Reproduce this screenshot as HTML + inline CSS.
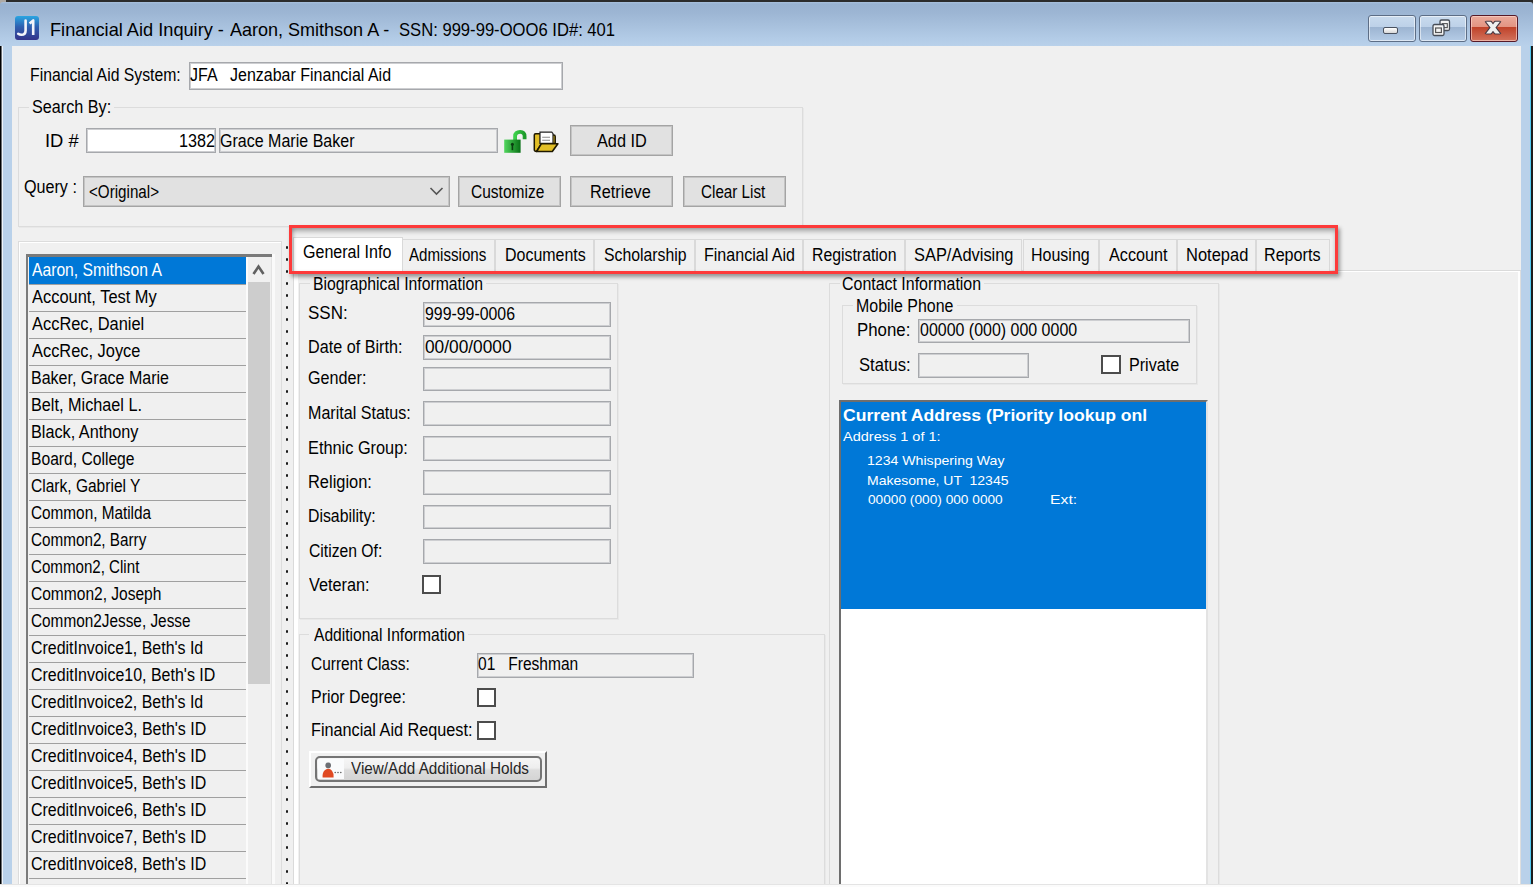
<!DOCTYPE html>
<html><head><meta charset="utf-8"><title>Financial Aid Inquiry</title>
<style>
html,body{margin:0;padding:0;width:1533px;height:887px;overflow:hidden;background:#2b2b2b}
body>div,body>svg{position:absolute}
.t{position:absolute;font-family:"Liberation Sans",sans-serif;white-space:pre;line-height:normal;transform-origin:0 0}
</style></head><body>
<div style="left:0px;top:0px;width:1533px;height:887px;background:#2b2b2b"></div>
<div style="left:0px;top:0px;width:6px;height:6px;background:#aeaaa6"></div>
<div style="left:0px;top:2px;width:1533px;height:885px;border-radius:3px 3px 0 0;background:linear-gradient(#a9c0dc 0px,#98b2d1 2px,#9cb5d3 10px,#b2cbe6 36px,#b9d1ea 44px,#b9d1ea 100%)"></div>
<div style="left:0px;top:46px;width:1px;height:838px;background:#000"></div>
<div style="left:1px;top:46px;width:1px;height:838px;background:#6a6e73"></div>
<div style="left:2px;top:46px;width:1px;height:838px;background:#eef4fb"></div>
<div style="left:1530px;top:46px;width:1px;height:838px;background:#52c9f2"></div>
<div style="left:1531px;top:46px;width:2px;height:841px;background:#1e1e1e"></div>
<div style="left:12px;top:46px;width:1509px;height:838px;background:#f0f0f0"></div>
<div style="left:1518px;top:271px;width:2px;height:613px;background:#fdfdfd"></div>
<div style="left:1520px;top:271px;width:1px;height:613px;background:#dedede"></div>
<div style="left:15px;top:16px;width:24px;height:24px;border-radius:3px;background:linear-gradient(#2aa6e2,#2f5fb0 45%,#34338a);"></div>
<svg style="left:15px;top:16px" width="24" height="24" viewBox="0 0 24 24"><path d="M10.6 4.6 V14.4 Q10.6 18.8 6.4 18.8 Q4.6 18.8 3.2 17.8" fill="none" stroke="#f4f4fa" stroke-width="2.6" stroke-linecap="round"/><path d="M14.6 7.4 L18.2 4.4 V19" fill="none" stroke="#f4f4fa" stroke-width="2.6" stroke-linejoin="round"/></svg>
<div style="left:1368px;top:15px;width:46px;height:25px;border:1px solid #5d6e86;border-radius:3px;background:linear-gradient(#c9dbee 0%,#bdd1e8 43%,#9cb4d1 44%,#b5cce6 100%);box-shadow:inset 0 0 0 1px rgba(255,255,255,.55)"></div>
<div style="left:1419px;top:15px;width:46px;height:25px;border:1px solid #5d6e86;border-radius:3px;background:linear-gradient(#c9dbee 0%,#bdd1e8 43%,#9cb4d1 44%,#b5cce6 100%);box-shadow:inset 0 0 0 1px rgba(255,255,255,.55)"></div>
<div style="left:1470px;top:15px;width:46px;height:25px;border:1px solid #561a28;border-radius:3px;background:linear-gradient(#eaaa9b 0%,#e39482 43%,#bf4128 44%,#d3735d 100%);box-shadow:inset 0 0 0 1px rgba(255,220,210,.6)"></div>
<div style="left:1383px;top:27px;width:13px;height:5px;border:1px solid #4a5260;border-radius:2px;background:linear-gradient(#ffffff,#d8d8d8)"></div>
<svg style="left:1430px;top:18px" width="22" height="20" viewBox="0 0 22 20"><rect x="10" y="2" width="9.5" height="10.5" rx="1.5" fill="#f4f4f4" stroke="#474d57" stroke-width="1.3"/><rect x="12.3" y="5.6" width="5" height="4" fill="none" stroke="#555" stroke-width="1.1"/><rect x="3" y="6.5" width="11" height="11" rx="1.5" fill="#f4f4f4" stroke="#474d57" stroke-width="1.3"/><rect x="5.6" y="10" width="5.8" height="4.5" fill="none" stroke="#555" stroke-width="1.2"/></svg>
<svg style="left:1483px;top:19px" width="20" height="18" viewBox="0 0 20 18"><clipPath id="xc"><rect x="0" y="1.8" width="20" height="13.6"/></clipPath><g clip-path="url(#xc)"><path d="M4 0.8 L16 16.4 M16 0.8 L4 16.4" stroke="#4a3a44" stroke-width="6"/></g><clipPath id="xc2"><rect x="0" y="2.8" width="20" height="11.6"/></clipPath><g clip-path="url(#xc2)"><path d="M4 0.8 L16 16.4 M16 0.8 L4 16.4" stroke="#f0f0f0" stroke-width="3.8"/></g></svg>
<div style="left:189px;top:62px;width:374px;height:28px;background:#fff;border:1px solid #a6a8ac;box-shadow:inset 0 0 0 1px #cdced1;box-sizing:border-box"></div>
<div style="left:18px;top:107px;width:785px;height:120px;border:1px solid #dcdcdc;box-shadow:1px 1px 0 #e8e8e8;box-sizing:border-box"></div>
<div style="left:29px;top:100px;width:85px;height:15px;background:#f0f0f0"></div>
<div style="left:86px;top:128px;width:130px;height:25px;background:#fff;border:1px solid #a6a8ac;box-shadow:inset 0 0 0 1px #cdced1;box-sizing:border-box"></div>
<div style="left:219px;top:128px;width:279px;height:25px;background:#f0f0f0;border:1px solid #a6a8ac;box-shadow:inset 0 0 0 1px #cdced1;box-sizing:border-box"></div>
<svg style="left:502px;top:129px" width="28" height="26" viewBox="0 0 28 26"><defs><linearGradient id="lg" x1="0" x2="1"><stop offset="0" stop-color="#52d65e"/><stop offset="0.45" stop-color="#30a83c"/><stop offset="1" stop-color="#087016"/></linearGradient><linearGradient id="lg2" x1="0" x2="1"><stop offset="0" stop-color="#3ccf4a"/><stop offset="1" stop-color="#1c9a2a"/></linearGradient></defs><path d="M13.1 11 V7.4 Q13.1 2.9 18.2 2.9 Q22.6 2.9 22.6 7.6 V10.2" fill="none" stroke="url(#lg2)" stroke-width="3.8"/><rect x="2.2" y="10.6" width="16.4" height="13.2" fill="url(#lg)"/><circle cx="10.4" cy="15.2" r="1.5" fill="#0a3d10"/><path d="M10.4 15 V21.2" stroke="#0a3d10" stroke-width="1.6"/></svg>
<svg style="left:532px;top:130px" width="28" height="24" viewBox="0 0 28 24"><path d="M2.3 5 Q2.3 3.8 3.6 3.8 H8.5 V13.4 H19.5 V5 H21.8 Q23.2 5 23.2 6.4 V13.6 L9.4 13.6 L4.6 21.4 Q2.3 21.4 2.3 19.8 Z" fill="#e2bf26" stroke="#1e1800" stroke-width="1.5" stroke-linejoin="round"/><path d="M8 13.4 V2.2 H19.8 L21 3.6 V13.4 Z" fill="#fff" stroke="#222" stroke-width="1.2"/><path d="M10.2 7.3 H18 M10.2 10.3 H18" stroke="#8a8a8a" stroke-width="1.1"/><path d="M4.6 21.5 L9.3 13.8 H25.9 L20.3 21.5 Z" fill="#e2bf26" stroke="#1e1800" stroke-width="1.6" stroke-linejoin="round"/></svg>
<div style="left:570px;top:125px;width:103px;height:31px;background:#e1e1e1;border:1px solid #a4a4a4;box-shadow:inset 0 0 0 1px #c4c4c4;box-sizing:border-box"></div>
<div style="left:83px;top:176px;width:367px;height:31px;background:#e1e1e1;border:1px solid #a4a4a4;box-shadow:inset 0 0 0 1px #c4c4c4;box-sizing:border-box"></div>
<svg style="left:428px;top:185px" width="18" height="12" viewBox="0 0 18 12"><path d="M2.5 3 L8.5 9 L14.5 3" fill="none" stroke="#555" stroke-width="1.6"/></svg>
<div style="left:458px;top:176px;width:103px;height:31px;background:#e1e1e1;border:1px solid #a4a4a4;box-shadow:inset 0 0 0 1px #c4c4c4;box-sizing:border-box"></div>
<div style="left:570px;top:176px;width:103px;height:31px;background:#e1e1e1;border:1px solid #a4a4a4;box-shadow:inset 0 0 0 1px #c4c4c4;box-sizing:border-box"></div>
<div style="left:683px;top:176px;width:103px;height:31px;background:#e1e1e1;border:1px solid #a4a4a4;box-shadow:inset 0 0 0 1px #c4c4c4;box-sizing:border-box"></div>
<div style="left:18px;top:241px;width:264px;height:643px;border-left:1px solid #dcdcdc;border-top:1px solid #dcdcdc;border-right:1px solid #dcdcdc;box-shadow:inset 1px 1px 0 #fff;box-sizing:border-box"></div>
<div style="left:26px;top:254px;width:247px;height:630px;background:#f0f0f0;border-left:2.5px solid #7a7a7a;border-top:3px solid #7a7a7a;box-sizing:border-box"></div>
<div style="left:272px;top:254px;width:3px;height:630px;background:#fafafa"></div>
<div style="left:271px;top:257px;width:1px;height:627px;background:#e4e4e4"></div>
<div style="left:29px;top:257px;width:217px;height:27px;background:#0078d7"></div>
<div style="left:29px;top:284px;width:217px;height:1px;background:#a0a0a0"></div>
<div style="left:29px;top:311px;width:217px;height:1px;background:#a0a0a0"></div>
<div style="left:29px;top:338px;width:217px;height:1px;background:#a0a0a0"></div>
<div style="left:29px;top:365px;width:217px;height:1px;background:#a0a0a0"></div>
<div style="left:29px;top:392px;width:217px;height:1px;background:#a0a0a0"></div>
<div style="left:29px;top:419px;width:217px;height:1px;background:#a0a0a0"></div>
<div style="left:29px;top:446px;width:217px;height:1px;background:#a0a0a0"></div>
<div style="left:29px;top:473px;width:217px;height:1px;background:#a0a0a0"></div>
<div style="left:29px;top:500px;width:217px;height:1px;background:#a0a0a0"></div>
<div style="left:29px;top:527px;width:217px;height:1px;background:#a0a0a0"></div>
<div style="left:29px;top:554px;width:217px;height:1px;background:#a0a0a0"></div>
<div style="left:29px;top:581px;width:217px;height:1px;background:#a0a0a0"></div>
<div style="left:29px;top:608px;width:217px;height:1px;background:#a0a0a0"></div>
<div style="left:29px;top:635px;width:217px;height:1px;background:#a0a0a0"></div>
<div style="left:29px;top:662px;width:217px;height:1px;background:#a0a0a0"></div>
<div style="left:29px;top:689px;width:217px;height:1px;background:#a0a0a0"></div>
<div style="left:29px;top:716px;width:217px;height:1px;background:#a0a0a0"></div>
<div style="left:29px;top:743px;width:217px;height:1px;background:#a0a0a0"></div>
<div style="left:29px;top:770px;width:217px;height:1px;background:#a0a0a0"></div>
<div style="left:29px;top:797px;width:217px;height:1px;background:#a0a0a0"></div>
<div style="left:29px;top:824px;width:217px;height:1px;background:#a0a0a0"></div>
<div style="left:29px;top:851px;width:217px;height:1px;background:#a0a0a0"></div>
<div style="left:29px;top:878px;width:217px;height:1px;background:#a0a0a0"></div>
<div style="left:29px;top:878px;width:217px;height:1px;background:#a0a0a0"></div>
<div style="left:246px;top:257px;width:2px;height:627px;background:#fbfbfb"></div>
<svg style="left:250px;top:262px" width="18" height="16" viewBox="0 0 18 16"><path d="M3.5 12 L8.5 4.5 L13.5 12" fill="none" stroke="#606060" stroke-width="2.6"/></svg>
<div style="left:248px;top:282px;width:22px;height:402px;background:#cdcdcd"></div>
<div style="left:286px;top:246.0px;width:2.4px;height:3px;border-radius:1px;background:#1a1a1a"></div>
<div style="left:286px;top:258.0px;width:2.4px;height:3px;border-radius:1px;background:#1a1a1a"></div>
<div style="left:286px;top:270.0px;width:2.4px;height:3px;border-radius:1px;background:#1a1a1a"></div>
<div style="left:286px;top:282.0px;width:2.4px;height:3px;border-radius:1px;background:#1a1a1a"></div>
<div style="left:286px;top:294.0px;width:2.4px;height:3px;border-radius:1px;background:#1a1a1a"></div>
<div style="left:286px;top:306.0px;width:2.4px;height:3px;border-radius:1px;background:#1a1a1a"></div>
<div style="left:286px;top:318.0px;width:2.4px;height:3px;border-radius:1px;background:#1a1a1a"></div>
<div style="left:286px;top:330.0px;width:2.4px;height:3px;border-radius:1px;background:#1a1a1a"></div>
<div style="left:286px;top:342.0px;width:2.4px;height:3px;border-radius:1px;background:#1a1a1a"></div>
<div style="left:286px;top:354.0px;width:2.4px;height:3px;border-radius:1px;background:#1a1a1a"></div>
<div style="left:286px;top:366.0px;width:2.4px;height:3px;border-radius:1px;background:#1a1a1a"></div>
<div style="left:286px;top:378.0px;width:2.4px;height:3px;border-radius:1px;background:#1a1a1a"></div>
<div style="left:286px;top:390.0px;width:2.4px;height:3px;border-radius:1px;background:#1a1a1a"></div>
<div style="left:286px;top:402.0px;width:2.4px;height:3px;border-radius:1px;background:#1a1a1a"></div>
<div style="left:286px;top:414.0px;width:2.4px;height:3px;border-radius:1px;background:#1a1a1a"></div>
<div style="left:286px;top:426.0px;width:2.4px;height:3px;border-radius:1px;background:#1a1a1a"></div>
<div style="left:286px;top:438.0px;width:2.4px;height:3px;border-radius:1px;background:#1a1a1a"></div>
<div style="left:286px;top:450.0px;width:2.4px;height:3px;border-radius:1px;background:#1a1a1a"></div>
<div style="left:286px;top:462.0px;width:2.4px;height:3px;border-radius:1px;background:#1a1a1a"></div>
<div style="left:286px;top:474.0px;width:2.4px;height:3px;border-radius:1px;background:#1a1a1a"></div>
<div style="left:286px;top:486.0px;width:2.4px;height:3px;border-radius:1px;background:#1a1a1a"></div>
<div style="left:286px;top:498.0px;width:2.4px;height:3px;border-radius:1px;background:#1a1a1a"></div>
<div style="left:286px;top:510.0px;width:2.4px;height:3px;border-radius:1px;background:#1a1a1a"></div>
<div style="left:286px;top:522.0px;width:2.4px;height:3px;border-radius:1px;background:#1a1a1a"></div>
<div style="left:286px;top:534.0px;width:2.4px;height:3px;border-radius:1px;background:#1a1a1a"></div>
<div style="left:286px;top:546.0px;width:2.4px;height:3px;border-radius:1px;background:#1a1a1a"></div>
<div style="left:286px;top:558.0px;width:2.4px;height:3px;border-radius:1px;background:#1a1a1a"></div>
<div style="left:286px;top:570.0px;width:2.4px;height:3px;border-radius:1px;background:#1a1a1a"></div>
<div style="left:286px;top:582.0px;width:2.4px;height:3px;border-radius:1px;background:#1a1a1a"></div>
<div style="left:286px;top:594.0px;width:2.4px;height:3px;border-radius:1px;background:#1a1a1a"></div>
<div style="left:286px;top:606.0px;width:2.4px;height:3px;border-radius:1px;background:#1a1a1a"></div>
<div style="left:286px;top:618.0px;width:2.4px;height:3px;border-radius:1px;background:#1a1a1a"></div>
<div style="left:286px;top:630.0px;width:2.4px;height:3px;border-radius:1px;background:#1a1a1a"></div>
<div style="left:286px;top:642.0px;width:2.4px;height:3px;border-radius:1px;background:#1a1a1a"></div>
<div style="left:286px;top:654.0px;width:2.4px;height:3px;border-radius:1px;background:#1a1a1a"></div>
<div style="left:286px;top:666.0px;width:2.4px;height:3px;border-radius:1px;background:#1a1a1a"></div>
<div style="left:286px;top:678.0px;width:2.4px;height:3px;border-radius:1px;background:#1a1a1a"></div>
<div style="left:286px;top:690.0px;width:2.4px;height:3px;border-radius:1px;background:#1a1a1a"></div>
<div style="left:286px;top:702.0px;width:2.4px;height:3px;border-radius:1px;background:#1a1a1a"></div>
<div style="left:286px;top:714.0px;width:2.4px;height:3px;border-radius:1px;background:#1a1a1a"></div>
<div style="left:286px;top:726.0px;width:2.4px;height:3px;border-radius:1px;background:#1a1a1a"></div>
<div style="left:286px;top:738.0px;width:2.4px;height:3px;border-radius:1px;background:#1a1a1a"></div>
<div style="left:286px;top:750.0px;width:2.4px;height:3px;border-radius:1px;background:#1a1a1a"></div>
<div style="left:286px;top:762.0px;width:2.4px;height:3px;border-radius:1px;background:#1a1a1a"></div>
<div style="left:286px;top:774.0px;width:2.4px;height:3px;border-radius:1px;background:#1a1a1a"></div>
<div style="left:286px;top:786.0px;width:2.4px;height:3px;border-radius:1px;background:#1a1a1a"></div>
<div style="left:286px;top:798.0px;width:2.4px;height:3px;border-radius:1px;background:#1a1a1a"></div>
<div style="left:286px;top:810.0px;width:2.4px;height:3px;border-radius:1px;background:#1a1a1a"></div>
<div style="left:286px;top:822.0px;width:2.4px;height:3px;border-radius:1px;background:#1a1a1a"></div>
<div style="left:286px;top:834.0px;width:2.4px;height:3px;border-radius:1px;background:#1a1a1a"></div>
<div style="left:286px;top:846.0px;width:2.4px;height:3px;border-radius:1px;background:#1a1a1a"></div>
<div style="left:286px;top:858.0px;width:2.4px;height:3px;border-radius:1px;background:#1a1a1a"></div>
<div style="left:286px;top:870.0px;width:2.4px;height:3px;border-radius:1px;background:#1a1a1a"></div>
<div style="left:286px;top:882.0px;width:2.4px;height:3px;border-radius:1px;background:#1a1a1a"></div>
<div style="left:293px;top:270px;width:1228px;height:614px;border-left:1px solid #dadada;border-top:1px solid #dadada;box-sizing:border-box"></div>
<div style="left:294px;top:271px;width:4px;height:613px;background:#fff"></div>
<div style="left:294px;top:271px;width:1226px;height:1px;background:#fff"></div>
<div style="left:402px;top:239px;width:93.39999999999998px;height:32px;background:#f0f0f0;border:1px solid #d9d9d9;border-bottom:none;box-sizing:border-box"></div>
<div style="left:495.4px;top:239px;width:99.0px;height:32px;background:#f0f0f0;border:1px solid #d9d9d9;border-bottom:none;box-sizing:border-box"></div>
<div style="left:594.4px;top:239px;width:100.80000000000007px;height:32px;background:#f0f0f0;border:1px solid #d9d9d9;border-bottom:none;box-sizing:border-box"></div>
<div style="left:695.2px;top:239px;width:107.59999999999991px;height:32px;background:#f0f0f0;border:1px solid #d9d9d9;border-bottom:none;box-sizing:border-box"></div>
<div style="left:802.8px;top:239px;width:102.30000000000007px;height:32px;background:#f0f0f0;border:1px solid #d9d9d9;border-bottom:none;box-sizing:border-box"></div>
<div style="left:905.1px;top:239px;width:117.39999999999998px;height:32px;background:#f0f0f0;border:1px solid #d9d9d9;border-bottom:none;box-sizing:border-box"></div>
<div style="left:1022.5px;top:239px;width:76.40000000000009px;height:32px;background:#f0f0f0;border:1px solid #d9d9d9;border-bottom:none;box-sizing:border-box"></div>
<div style="left:1098.9px;top:239px;width:77.79999999999995px;height:32px;background:#f0f0f0;border:1px solid #d9d9d9;border-bottom:none;box-sizing:border-box"></div>
<div style="left:1176.7px;top:239px;width:79.70000000000005px;height:32px;background:#f0f0f0;border:1px solid #d9d9d9;border-bottom:none;box-sizing:border-box"></div>
<div style="left:1256.4px;top:239px;width:73.59999999999991px;height:32px;background:#f0f0f0;border:1px solid #d9d9d9;border-bottom:none;box-sizing:border-box"></div>
<div style="left:293px;top:236.8px;width:110px;height:35.19999999999999px;background:#fff;border:1px solid #d9d9d9;border-bottom:none;box-sizing:border-box"></div>
<div style="left:299px;top:283px;width:318.5px;height:335.5px;border:1px solid #dcdcdc;box-shadow:1px 1px 0 #e8e8e8;box-sizing:border-box"></div>
<div style="left:310px;top:276px;width:176px;height:16px;background:#f0f0f0"></div>
<div style="left:423px;top:302px;width:187.5px;height:24.80000000000001px;background:#f0f0f0;border:1px solid #a6a8ac;box-shadow:inset 0 0 0 1px #cdced1;box-sizing:border-box"></div>
<div style="left:423px;top:335px;width:187.5px;height:24.80000000000001px;background:#f0f0f0;border:1px solid #a6a8ac;box-shadow:inset 0 0 0 1px #cdced1;box-sizing:border-box"></div>
<div style="left:423px;top:366.7px;width:187.5px;height:24.80000000000001px;background:#f0f0f0;border:1px solid #a6a8ac;box-shadow:inset 0 0 0 1px #cdced1;box-sizing:border-box"></div>
<div style="left:423px;top:401.1px;width:187.5px;height:24.80000000000001px;background:#f0f0f0;border:1px solid #a6a8ac;box-shadow:inset 0 0 0 1px #cdced1;box-sizing:border-box"></div>
<div style="left:423px;top:435.8px;width:187.5px;height:24.80000000000001px;background:#f0f0f0;border:1px solid #a6a8ac;box-shadow:inset 0 0 0 1px #cdced1;box-sizing:border-box"></div>
<div style="left:423px;top:470.2px;width:187.5px;height:24.80000000000001px;background:#f0f0f0;border:1px solid #a6a8ac;box-shadow:inset 0 0 0 1px #cdced1;box-sizing:border-box"></div>
<div style="left:423px;top:504.6px;width:187.5px;height:24.799999999999955px;background:#f0f0f0;border:1px solid #a6a8ac;box-shadow:inset 0 0 0 1px #cdced1;box-sizing:border-box"></div>
<div style="left:423px;top:539.3px;width:187.5px;height:24.799999999999955px;background:#f0f0f0;border:1px solid #a6a8ac;box-shadow:inset 0 0 0 1px #cdced1;box-sizing:border-box"></div>
<div style="left:421.5px;top:574.6px;width:19.5px;height:19.699999999999932px;background:#fff;border:2px solid #4c4c4c;box-sizing:border-box"></div>
<div style="left:299px;top:634px;width:525.5px;height:256px;border:1px solid #dcdcdc;box-shadow:1px 1px 0 #e8e8e8;box-sizing:border-box"></div>
<div style="left:309px;top:626px;width:159px;height:16px;background:#f0f0f0"></div>
<div style="left:477.3px;top:653.1px;width:216.7px;height:24.699999999999932px;background:#f0f0f0;border:1px solid #a6a8ac;box-shadow:inset 0 0 0 1px #cdced1;box-sizing:border-box"></div>
<div style="left:477.3px;top:687.8px;width:19.19999999999999px;height:19.200000000000045px;background:#fff;border:2px solid #4c4c4c;box-sizing:border-box"></div>
<div style="left:477.3px;top:720.7px;width:19.19999999999999px;height:19.299999999999955px;background:#fff;border:2px solid #4c4c4c;box-sizing:border-box"></div>
<div style="left:309.4px;top:750.6px;width:238.10000000000002px;height:37.39999999999998px;background:#f0f0f0;border-top:2px solid #fff;border-left:2.5px solid #fff;border-bottom:2.5px solid #6e6e6e;border-right:2.5px solid #6e6e6e;box-sizing:border-box"></div>
<div style="left:315px;top:756.2px;width:226.5px;height:25.5px;border:2px solid #747474;border-radius:5px;box-sizing:border-box;background:linear-gradient(#f6f6f6,#eeeeee 45%,#dcdcdc 55%,#d4d4d4)"></div>
<div style="left:318px;top:759px;width:26px;height:20px;background:#fafbfc"></div>
<svg style="left:318px;top:758px" width="26" height="22" viewBox="0 0 26 22"><circle cx="10.2" cy="7.4" r="2.8" fill="#6c6f74"/><path d="M4.6 19.6 Q4.2 15 6.5 12.6 Q8 10.8 10.2 10.8 Q12.6 10.8 14 12.8 Q15.8 15 15.6 19.6 Z" fill="#e04a22"/><circle cx="17.2" cy="14.6" r=".75" fill="#555"/><circle cx="20" cy="14.6" r=".75" fill="#555"/><circle cx="22.8" cy="14.6" r=".75" fill="#555"/></svg>
<div style="left:828.8px;top:283px;width:390.20000000000005px;height:607px;border:1px solid #dcdcdc;box-shadow:1px 1px 0 #e8e8e8;box-sizing:border-box"></div>
<div style="left:839.5px;top:276px;width:144.5px;height:16px;background:#f0f0f0"></div>
<div style="left:841.7px;top:305px;width:355.29999999999995px;height:79px;border:1px solid #dcdcdc;box-shadow:1px 1px 0 #e8e8e8;box-sizing:border-box"></div>
<div style="left:853px;top:298px;width:104px;height:16px;background:#f0f0f0"></div>
<div style="left:918px;top:318.5px;width:271.5px;height:24.80000000000001px;background:#f0f0f0;border:1px solid #a6a8ac;box-shadow:inset 0 0 0 1px #cdced1;box-sizing:border-box"></div>
<div style="left:918px;top:352.9px;width:110.5px;height:24.700000000000045px;background:#f0f0f0;border:1px solid #a6a8ac;box-shadow:inset 0 0 0 1px #cdced1;box-sizing:border-box"></div>
<div style="left:1101px;top:354.8px;width:20px;height:19.5px;background:#fff;border:2px solid #4c4c4c;box-sizing:border-box"></div>
<div style="left:839px;top:399.5px;width:369px;height:484.5px;background:#fff;border-left:2.4px solid #6e6e6e;border-top:2.6px solid #6e6e6e;border-right:2px solid #e3e3e3;box-sizing:border-box"></div>
<div style="left:841.4px;top:402.4px;width:364.6px;height:206.80000000000007px;background:#0078d7"></div>
<div style="left:0px;top:884px;width:1533px;height:1px;background:#e4e4e4"></div>
<div style="left:0px;top:885px;width:1533px;height:2px;background:#fbfbfb"></div>
<div style="left:289px;top:225px;width:1049px;height:48.6px;border:3.2px solid #fd3a3a;box-sizing:border-box;box-shadow:2px 3px 4px rgba(0,0,0,.38), inset 0 4px 5px -1px rgba(0,0,0,.33), inset 3px 0 4px -2px rgba(0,0,0,.2)"></div>
<div class="t" style="left:50.32px;top:18.80px;font-size:18.5px;font-weight:400;color:#000;transform:scaleX(0.9834)">Financial Aid Inquiry -</div>
<div class="t" style="left:230.08px;top:18.80px;font-size:18.5px;font-weight:400;color:#000;transform:scaleX(0.9735)">Aaron, Smithson A -</div>
<div class="t" style="left:398.71px;top:18.80px;font-size:18.5px;font-weight:400;color:#000;transform:scaleX(0.8980)">SSN: 999-99-OOO6 ID#: 401</div>
<div class="t" style="left:29.66px;top:64.60px;font-size:17.5px;font-weight:400;color:#000;transform:scaleX(0.9010)">Financial Aid System:</div>
<div class="t" style="left:190.17px;top:64.80px;font-size:17.5px;font-weight:400;color:#000;transform:scaleX(0.9144)">JFA   Jenzabar Financial Aid</div>
<div class="t" style="left:32.09px;top:97.00px;font-size:17.5px;font-weight:400;color:#000;transform:scaleX(0.9251)">Search By:</div>
<div class="t" style="left:44.79px;top:131.00px;font-size:17.5px;font-weight:400;color:#000;transform:scaleX(1.0502)">ID #</div>
<div class="t" style="left:178.53px;top:131.00px;font-size:17.5px;font-weight:400;color:#000;transform:scaleX(0.9229)">1382</div>
<div class="t" style="left:219.60px;top:131.00px;font-size:17.5px;font-weight:400;color:#000;transform:scaleX(0.9160)">Grace Marie Baker</div>
<div class="t" style="left:596.80px;top:131.10px;font-size:17.5px;font-weight:400;color:#000;transform:scaleX(0.9311)">Add ID</div>
<div class="t" style="left:24.29px;top:177.00px;font-size:17.5px;font-weight:400;color:#000;transform:scaleX(0.9221)">Query :</div>
<div class="t" style="left:88.64px;top:182.20px;font-size:17.5px;font-weight:400;color:#000;transform:scaleX(0.8671)">&lt;Original&gt;</div>
<div class="t" style="left:470.92px;top:182.00px;font-size:17.5px;font-weight:400;color:#000;transform:scaleX(0.8864)">Customize</div>
<div class="t" style="left:590.02px;top:182.00px;font-size:17.5px;font-weight:400;color:#000;transform:scaleX(0.9317)">Retrieve</div>
<div class="t" style="left:700.84px;top:182.00px;font-size:17.5px;font-weight:400;color:#000;transform:scaleX(0.8700)">Clear List</div>
<div class="t" style="left:32.10px;top:260.00px;font-size:17.5px;font-weight:400;color:#fff;transform:scaleX(0.8959)">Aaron, Smithson A</div>
<div class="t" style="left:32.10px;top:287.00px;font-size:17.5px;font-weight:400;color:#000;transform:scaleX(0.9385)">Account, Test My</div>
<div class="t" style="left:32.10px;top:314.00px;font-size:17.5px;font-weight:400;color:#000;transform:scaleX(0.9384)">AccRec, Daniel</div>
<div class="t" style="left:32.10px;top:341.00px;font-size:17.5px;font-weight:400;color:#000;transform:scaleX(0.9365)">AccRec, Joyce</div>
<div class="t" style="left:30.84px;top:368.00px;font-size:17.5px;font-weight:400;color:#000;transform:scaleX(0.9151)">Baker, Grace Marie</div>
<div class="t" style="left:30.82px;top:395.00px;font-size:17.5px;font-weight:400;color:#000;transform:scaleX(0.9278)">Belt, Michael L.</div>
<div class="t" style="left:30.82px;top:422.00px;font-size:17.5px;font-weight:400;color:#000;transform:scaleX(0.9285)">Black, Anthony</div>
<div class="t" style="left:30.87px;top:449.00px;font-size:17.5px;font-weight:400;color:#000;transform:scaleX(0.8942)">Board, College</div>
<div class="t" style="left:31.32px;top:476.00px;font-size:17.5px;font-weight:400;color:#000;transform:scaleX(0.8878)">Clark, Gabriel Y</div>
<div class="t" style="left:31.33px;top:503.00px;font-size:17.5px;font-weight:400;color:#000;transform:scaleX(0.8756)">Common, Matilda</div>
<div class="t" style="left:31.34px;top:530.00px;font-size:17.5px;font-weight:400;color:#000;transform:scaleX(0.8716)">Common2, Barry</div>
<div class="t" style="left:31.34px;top:557.00px;font-size:17.5px;font-weight:400;color:#000;transform:scaleX(0.8635)">Common2, Clint</div>
<div class="t" style="left:31.32px;top:584.00px;font-size:17.5px;font-weight:400;color:#000;transform:scaleX(0.8877)">Common2, Joseph</div>
<div class="t" style="left:31.33px;top:611.00px;font-size:17.5px;font-weight:400;color:#000;transform:scaleX(0.8771)">Common2Jesse, Jesse</div>
<div class="t" style="left:31.30px;top:638.00px;font-size:17.5px;font-weight:400;color:#000;transform:scaleX(0.9106)">CreditInvoice1, Beth's Id</div>
<div class="t" style="left:31.30px;top:665.00px;font-size:17.5px;font-weight:400;color:#000;transform:scaleX(0.9135)">CreditInvoice10, Beth's ID</div>
<div class="t" style="left:31.30px;top:692.00px;font-size:17.5px;font-weight:400;color:#000;transform:scaleX(0.9106)">CreditInvoice2, Beth's Id</div>
<div class="t" style="left:31.30px;top:719.00px;font-size:17.5px;font-weight:400;color:#000;transform:scaleX(0.9124)">CreditInvoice3, Beth's ID</div>
<div class="t" style="left:31.30px;top:746.00px;font-size:17.5px;font-weight:400;color:#000;transform:scaleX(0.9124)">CreditInvoice4, Beth's ID</div>
<div class="t" style="left:31.30px;top:773.00px;font-size:17.5px;font-weight:400;color:#000;transform:scaleX(0.9124)">CreditInvoice5, Beth's ID</div>
<div class="t" style="left:31.30px;top:800.00px;font-size:17.5px;font-weight:400;color:#000;transform:scaleX(0.9124)">CreditInvoice6, Beth's ID</div>
<div class="t" style="left:31.30px;top:827.00px;font-size:17.5px;font-weight:400;color:#000;transform:scaleX(0.9124)">CreditInvoice7, Beth's ID</div>
<div class="t" style="left:31.30px;top:854.00px;font-size:17.5px;font-weight:400;color:#000;transform:scaleX(0.9124)">CreditInvoice8, Beth's ID</div>
<div class="t" style="left:409.30px;top:245.00px;font-size:17.5px;font-weight:400;color:#000;transform:scaleX(0.8641)">Admissions</div>
<div class="t" style="left:504.95px;top:245.00px;font-size:17.5px;font-weight:400;color:#000;transform:scaleX(0.9121)">Documents</div>
<div class="t" style="left:603.61px;top:245.00px;font-size:17.5px;font-weight:400;color:#000;transform:scaleX(0.9024)">Scholarship</div>
<div class="t" style="left:703.94px;top:245.00px;font-size:17.5px;font-weight:400;color:#000;transform:scaleX(0.9168)">Financial Aid</div>
<div class="t" style="left:812.36px;top:245.00px;font-size:17.5px;font-weight:400;color:#000;transform:scaleX(0.9045)">Registration</div>
<div class="t" style="left:913.98px;top:245.00px;font-size:17.5px;font-weight:400;color:#000;transform:scaleX(0.9385)">SAP/Advising</div>
<div class="t" style="left:1031.24px;top:245.00px;font-size:17.5px;font-weight:400;color:#000;transform:scaleX(0.9136)">Housing</div>
<div class="t" style="left:1108.60px;top:245.00px;font-size:17.5px;font-weight:400;color:#000;transform:scaleX(0.9251)">Account</div>
<div class="t" style="left:1185.51px;top:245.00px;font-size:17.5px;font-weight:400;color:#000;transform:scaleX(0.9415)">Notepad</div>
<div class="t" style="left:1264.43px;top:245.00px;font-size:17.5px;font-weight:400;color:#000;transform:scaleX(0.9215)">Reports</div>
<div class="t" style="left:302.90px;top:241.60px;font-size:17.5px;font-weight:400;color:#000;transform:scaleX(0.9173)">General Info</div>
<div class="t" style="left:312.76px;top:274.00px;font-size:17.5px;font-weight:400;color:#000;transform:scaleX(0.9009)">Biographical Information</div>
<div class="t" style="left:308.45px;top:303.20px;font-size:17.5px;font-weight:400;color:#000;transform:scaleX(0.9720)">SSN:</div>
<div class="t" style="left:424.71px;top:303.50px;font-size:17.5px;font-weight:400;color:#000;transform:scaleX(0.9065)">999-99-0006</div>
<div class="t" style="left:308.03px;top:336.50px;font-size:17.5px;font-weight:400;color:#000;transform:scaleX(0.9241)">Date of Birth:</div>
<div class="t" style="left:424.88px;top:336.80px;font-size:17.5px;font-weight:400;color:#000;transform:scaleX(0.9878)">00/00/0000</div>
<div class="t" style="left:308.49px;top:368.10px;font-size:17.5px;font-weight:400;color:#000;transform:scaleX(0.9235)">Gender:</div>
<div class="t" style="left:308.04px;top:402.50px;font-size:17.5px;font-weight:400;color:#000;transform:scaleX(0.9185)">Marital Status:</div>
<div class="t" style="left:308.02px;top:437.50px;font-size:17.5px;font-weight:400;color:#000;transform:scaleX(0.9327)">Ethnic Group:</div>
<div class="t" style="left:308.01px;top:471.60px;font-size:17.5px;font-weight:400;color:#000;transform:scaleX(0.9382)">Religion:</div>
<div class="t" style="left:308.06px;top:506.00px;font-size:17.5px;font-weight:400;color:#000;transform:scaleX(0.9043)">Disability:</div>
<div class="t" style="left:308.51px;top:541.00px;font-size:17.5px;font-weight:400;color:#000;transform:scaleX(0.8972)">Citizen Of:</div>
<div class="t" style="left:309.18px;top:575.30px;font-size:17.5px;font-weight:400;color:#000;transform:scaleX(0.9291)">Veteran:</div>
<div class="t" style="left:313.60px;top:624.60px;font-size:17.5px;font-weight:400;color:#000;transform:scaleX(0.8910)">Additional Information</div>
<div class="t" style="left:311.33px;top:654.30px;font-size:17.5px;font-weight:400;color:#000;transform:scaleX(0.8823)">Current Class:</div>
<div class="t" style="left:478.44px;top:654.30px;font-size:17.5px;font-weight:400;color:#000;transform:scaleX(0.8882)">01   Freshman</div>
<div class="t" style="left:310.75px;top:687.20px;font-size:17.5px;font-weight:400;color:#000;transform:scaleX(0.9117)">Prior Degree:</div>
<div class="t" style="left:310.72px;top:720.00px;font-size:17.5px;font-weight:400;color:#000;transform:scaleX(0.9274)">Financial Aid Request:</div>
<div class="t" style="left:350.68px;top:760.10px;font-size:16px;font-weight:400;color:#262626;transform:scaleX(0.9545)">View/Add Additional Holds</div>
<div class="t" style="left:841.70px;top:273.70px;font-size:17.5px;font-weight:400;color:#000;transform:scaleX(0.9108)">Contact Information</div>
<div class="t" style="left:856.25px;top:296.20px;font-size:17.5px;font-weight:400;color:#000;transform:scaleX(0.9106)">Mobile Phone</div>
<div class="t" style="left:856.98px;top:320.30px;font-size:17.5px;font-weight:400;color:#000;transform:scaleX(0.9619)">Phone:</div>
<div class="t" style="left:920.03px;top:320.30px;font-size:17.5px;font-weight:400;color:#000;transform:scaleX(0.9124)">00000 (000) 000 0000</div>
<div class="t" style="left:858.67px;top:354.60px;font-size:17.5px;font-weight:400;color:#000;transform:scaleX(0.9481)">Status:</div>
<div class="t" style="left:1128.53px;top:354.60px;font-size:17.5px;font-weight:400;color:#000;transform:scaleX(0.9206)">Private</div>
<div class="t" style="left:843.41px;top:406.60px;font-size:16px;font-weight:700;color:#fff;transform:scaleX(1.0993)">Current Address (Priority lookup onl</div>
<div class="t" style="left:843.40px;top:428.90px;font-size:13px;font-weight:400;color:#fff;transform:scaleX(1.1154)">Address 1 of 1:</div>
<div class="t" style="left:867.12px;top:453.00px;font-size:13px;font-weight:400;color:#fff;transform:scaleX(1.0850)">1234 Whispering Way</div>
<div class="t" style="left:866.99px;top:472.60px;font-size:13px;font-weight:400;color:#fff;transform:scaleX(1.0777)">Makesome, UT  12345</div>
<div class="t" style="left:867.67px;top:492.30px;font-size:13px;font-weight:400;color:#fff;transform:scaleX(1.0530)">00000 (000) 000 0000</div>
<div class="t" style="left:1049.54px;top:492.30px;font-size:13px;font-weight:400;color:#fff;transform:scaleX(1.2124)">Ext:</div>
</body></html>
